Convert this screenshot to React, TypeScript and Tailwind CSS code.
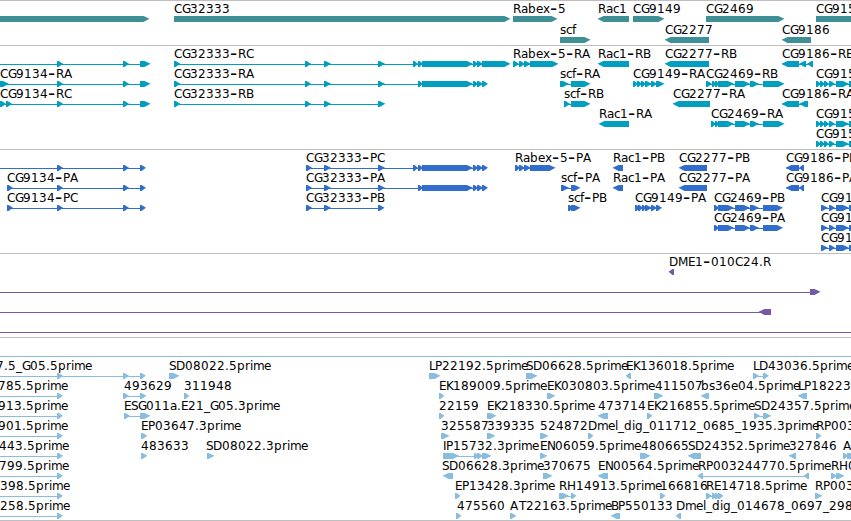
type Feature = {
  row: number;
  label?: string;
  x?: number;
  dir?: "left" | "right";
  line?: [number, number];
  blocks?: [number, number][];
};

type TrackProps = {
  features: Feature[];
  height: number;
  rowHeight?: number;
  color: string;
};

// glyph advances in px, anything not listed is 8
const advances: Record<string, number> = {
  A: 9, B: 7, D: 9, E: 7, H: 9, I: 3, K: 7, L: 6, M: 10, P: 7, S: 7, T: 7,
  a: 7, c: 6, e: 7, f: 4, i: 3, l: 3, m: 11, r: 5, s: 6, x: 7,
  ".": 4, _: 6,
};

const charPositions = (label: string, start: number) => {
  let pos = Math.ceil(start);
  return label
    .split("")
    .map((ch) => {
      const current = pos;
      pos += advances[ch] ?? 8;
      return current;
    })
    .join(" ");
};

// hyphens are set larger, so they sit a little lower to stay centered
const charBaselines = (label: string, y: number) =>
  label
    .split("")
    .map((ch) => (ch === "-" ? y + 1.5 : y))
    .join(" ");

const arrowPoints = (from: number, to: number, top: number, dir: string) => {
  const head = Math.min(6, to - from - 1.5);
  const mid = top + 2.8;
  const bottom = top + 6;
  if (dir === "left") {
    return `${to},${top} ${from + head},${top} ${from},${mid} ${from + head},${bottom} ${to},${bottom}`;
  }
  return `${from},${top} ${to - head},${top} ${to},${mid} ${to - head},${bottom} ${from},${bottom}`;
};

const genes: Feature[] = [
  { row: 0, blocks: [[-10, 149.5]] },
  { row: 0, label: "CG32333", x: 174, blocks: [[174, 510.5]] },
  { row: 0, label: "Rabex-5", x: 513, blocks: [[513, 557.5]] },
  { row: 1, label: "scf", x: 560, blocks: [[560, 590.5]] },
  { row: 0, label: "Rac1", x: 598, dir: "left", blocks: [[597.5, 629]] },
  { row: 0, label: "CG9149", x: 633, blocks: [[633, 664.5]] },
  { row: 1, label: "CG2277", x: 665, dir: "left", blocks: [[664.5, 709]] },
  { row: 0, label: "CG2469", x: 706, blocks: [[706, 784.5]] },
  { row: 1, label: "CG9186", x: 782, dir: "left", blocks: [[781.5, 811]] },
  { row: 0, label: "CG9155", x: 816, blocks: [[816, 900]] },
];

const cg9155Exons: [number, number][] = [[816, 821], [820, 825], [824, 829], [829, 835], [836, 849], [849, 860]];
const cg2469Exons: [number, number][] = [[718, 734], [735, 750], [750, 759], [763, 784.5]];

const transcripts: Feature[] = [
  { row: 0, line: [-5, 145], blocks: [[57, 63], [123, 129], [140, 150.5]] },
  {
    row: 0,
    label: "CG32333-RC",
    x: 174,
    blocks: [[174, 180.5], [305, 311], [324, 331], [378, 385], [413, 418], [418, 423], [422, 473], [473, 478], [477, 483], [482, 510.5]],
  },
  { row: 0, label: "Rabex-5-RA", x: 513, blocks: [[513, 519], [519, 525], [524, 531], [530, 558.5]] },
  { row: 0, label: "Rac1-RB", x: 597.5, dir: "left", blocks: [[597.5, 629]] },
  { row: 0, label: "CG2277-RB", x: 665, dir: "left", blocks: [[664.5, 709]] },
  { row: 0, label: "CG9186-RB", x: 782, dir: "left", blocks: [[781.5, 799], [799, 806], [807, 813]] },
  { row: 1, label: "CG9134-RA", x: 0, blocks: [[-5, 9], [57, 63], [123, 129], [140, 150.5]] },
  {
    row: 1,
    label: "CG32333-RA",
    x: 174,
    blocks: [[174, 180.5], [305, 311], [324, 331], [378, 385], [418, 423], [422, 473], [473, 478], [477, 483], [482, 488]],
  },
  { row: 1, label: "scf-RA", x: 559.5, blocks: [[560, 569], [571, 590.5]] },
  { row: 1, label: "CG9149-RA", x: 633, blocks: [[633, 638], [637, 642], [641, 646], [645, 652], [651, 657], [656, 664.5]] },
  { row: 1, label: "CG2469-RB", x: 706, blocks: [[706, 712], [712, 716], [715, 719], ...cg2469Exons] },
  { row: 1, label: "CG9155-RA", x: 816, blocks: cg9155Exons },
  { row: 2, label: "CG9134-RC", x: 0, blocks: [[0, 6], [6, 12], [57, 63], [123, 129], [140, 150.5]] },
  { row: 2, label: "CG32333-RB", x: 174, blocks: [[174, 180.5], [305, 311], [324, 331], [378, 385.5]] },
  { row: 2, label: "scf-RB", x: 564, blocks: [[564, 570], [571, 590.5]] },
  { row: 2, label: "CG2277-RA", x: 673, dir: "left", blocks: [[672.5, 710]] },
  { row: 2, label: "CG9186-RA", x: 782, dir: "left", blocks: [[781.5, 799], [799, 808]] },
  { row: 3, label: "Rac1-RA", x: 598.5, dir: "left", blocks: [[598.5, 629]] },
  { row: 3, label: "CG2469-RA", x: 711, blocks: [[711, 716], [715, 719], ...cg2469Exons] },
  { row: 3, label: "CG9155-RB", x: 816, blocks: cg9155Exons },
  { row: 4, label: "CG9155-RC", x: 816, blocks: cg9155Exons },
];

const cg9155Coding: [number, number][] = [[821, 828], [829, 835], [836, 849], [849, 860]];
const cg2469Coding: [number, number][] = [[714, 719], [718, 734], [735, 750], [750, 759], [763, 783]];

const proteins: Feature[] = [
  { row: 0, line: [-5, 143], blocks: [[57, 63], [123, 129], [140, 146]] },
  {
    row: 0,
    label: "CG32333-PC",
    x: 306,
    blocks: [[306, 312], [324, 331], [378, 385], [413, 418], [418, 423], [422, 473], [473, 478], [477, 483], [482, 488]],
  },
  { row: 0, label: "Rabex-5-PA", x: 515, blocks: [[515, 520], [519, 525], [524, 531], [530, 555.5]] },
  { row: 0, label: "Rac1-PB", x: 612.5, dir: "left", blocks: [[612.5, 623]] },
  { row: 0, label: "CG2277-PB", x: 679, dir: "left", blocks: [[678.5, 707]] },
  { row: 0, label: "CG9186-PB", x: 786, dir: "left", blocks: [[785.5, 799], [799, 804]] },
  { row: 1, label: "CG9134-PA", x: 7, blocks: [[7, 13], [57, 63], [123, 129], [140, 146]] },
  {
    row: 1,
    label: "CG32333-PA",
    x: 306,
    blocks: [[306, 312], [324, 331], [378, 385], [418, 423], [422, 473], [473, 478], [477, 483], [482, 488]],
  },
  { row: 1, label: "scf-PA", x: 560.5, blocks: [[561, 569], [571, 580.5]] },
  { row: 1, label: "Rac1-PA", x: 612.5, dir: "left", blocks: [[612.5, 623]] },
  { row: 1, label: "CG2277-PA", x: 679, dir: "left", blocks: [[678.5, 707]] },
  { row: 1, label: "CG9186-PA", x: 786, dir: "left", blocks: [[785.5, 799], [799, 804]] },
  { row: 2, label: "CG9134-PC", x: 7, blocks: [[7, 13], [57, 63], [123, 129], [140, 146]] },
  { row: 2, label: "CG32333-PB", x: 306, blocks: [[306, 312], [324, 331], [378, 384.5]] },
  { row: 2, label: "scf-PB", x: 567.5, blocks: [[568, 573], [571, 580.5]] },
  { row: 2, label: "CG9149-PA", x: 635, blocks: [[635, 640], [638, 643], [642, 646], [645, 652], [651, 657], [656, 662]] },
  { row: 2, label: "CG2469-PB", x: 714, blocks: cg2469Coding },
  { row: 2, label: "CG9155-PA", x: 821, blocks: cg9155Coding },
  { row: 3, label: "CG2469-PA", x: 714, blocks: cg2469Coding },
  { row: 3, label: "CG9155-PB", x: 821, blocks: cg9155Coding },
  { row: 4, label: "CG9155-PC", x: 821, blocks: cg9155Coding },
];

const clones: Feature[] = [
  { row: 0, label: "DME1-010C24.R", x: 668.5, dir: "left", blocks: [[668.5, 674]] },
  { row: 1, line: [0, 812], blocks: [[810, 820.5]] },
  { row: 2, line: [0, 762], dir: "left", blocks: [[758.5, 771]] },
  { row: 3, line: [0, 851] },
];

const ests: Feature[] = [
  { row: 0, line: [0, 851] },
  { row: 1, label: "7.5_G05.5prime", x: -4.5, line: [0, 143], blocks: [[57, 63], [123, 129], [140, 146]] },
  { row: 1, label: "SD08022.5prime", x: 168.5, blocks: [[169, 179.5]] },
  { row: 1, label: "LP22192.5prime", x: 428.5, blocks: [[429, 440.5]] },
  { row: 1, label: "SD06628.5prime", x: 525.5, blocks: [[526, 537.5]] },
  { row: 1, label: "EK136018.5prime", x: 626, dir: "left", blocks: [[625.5, 631]] },
  { row: 1, label: "LD43036.5prime", x: 753, blocks: [[753, 759], [763, 769]] },
  { row: 2, label: "785.5prime", x: -2, line: [0, 60], blocks: [[57, 63]] },
  { row: 2, label: "493629", x: 123.5, blocks: [[123, 129], [140, 146.5]] },
  { row: 2, label: "311948", x: 184, blocks: [[184, 189.5]] },
  { row: 2, label: "EK189009.5prime", x: 438.5, blocks: [[439, 444.5]] },
  { row: 2, label: "EK030803.5prime", x: 546.5, blocks: [[547, 555.5]] },
  { row: 2, label: "411507", x: 654.5, blocks: [[654, 663.5]] },
  { row: 2, label: "bs36e04.5prime", x: 700.5, dir: "left", blocks: [[700.5, 709]] },
  { row: 2, label: "LP18223.5prime", x: 797.5, dir: "left", blocks: [[797.5, 807]] },
  { row: 3, label: "913.5prime", x: -2, line: [0, 60], blocks: [[57, 63]] },
  { row: 3, label: "ESG011a.E21_G05.3prime", x: 124, blocks: [[124, 130], [140, 150.5]] },
  { row: 3, label: "22159", x: 438.5, blocks: [[439, 444.5]] },
  { row: 3, label: "EK218330.5prime", x: 486.5, blocks: [[487, 496.5]] },
  { row: 3, label: "473714", x: 598, dir: "left", blocks: [[597.5, 608]] },
  { row: 3, label: "EK216855.5prime", x: 646.5, blocks: [[647, 652.5]] },
  { row: 3, label: "SD24357.5prime", x: 753.5, blocks: [[754, 760], [763, 771.5]] },
  { row: 4, label: "901.5prime", x: -2, line: [0, 60], blocks: [[57, 63]] },
  { row: 4, label: "EP03647.3prime", x: 141, blocks: [[141, 147.5]] },
  { row: 4, label: "325587", x: 440.5, blocks: [[441, 449.5]] },
  { row: 4, label: "339335", x: 487, blocks: [[487, 495.5]] },
  { row: 4, label: "524872", x: 539.5, blocks: [[540, 548.5]] },
  { row: 4, label: "Dmel_dig_011712_0685_1935.3prime", x: 587.5, blocks: [[588, 593.5]] },
  { row: 4, label: "RP0037", x: 815.5, blocks: [[816, 821.5]] },
  { row: 5, label: "443.5prime", x: -1, line: [0, 60], blocks: [[57, 63]] },
  { row: 5, label: "483633", x: 141, blocks: [[141, 147.5]] },
  { row: 5, label: "SD08022.3prime", x: 206, blocks: [[207, 214.5]] },
  { row: 5, label: "IP15732.3prime", x: 442.5, blocks: [[443, 459], [474, 478], [477, 483], [482, 491.5]] },
  { row: 5, label: "EN06059.5prime", x: 539.5, blocks: [[540, 547.5]] },
  { row: 5, label: "480665", x: 640.5, blocks: [[640, 645], [642, 650.5]] },
  { row: 5, label: "SD24352.5prime", x: 687.5, dir: "left", blocks: [[687.5, 701]] },
  { row: 5, label: "327846", x: 788.5, dir: "left", blocks: [[788.5, 796]] },
  { row: 5, label: "A", x: 843, blocks: [[843, 848], [847, 856]] },
  { row: 6, label: "799.5prime", x: -1, line: [0, 60], blocks: [[57, 63]] },
  { row: 6, label: "SD06628.3prime", x: 442, dir: "left", blocks: [[442.5, 453]] },
  { row: 6, label: "370675", x: 543, blocks: [[543, 552.5]] },
  { row: 6, label: "EN00564.5prime", x: 598, dir: "left", blocks: [[597.5, 608]] },
  { row: 6, label: "RP003244770.5prime", x: 697.5, dir: "left", blocks: [[697.5, 703], [803.5, 809]] },
  { row: 6, label: "RH0", x: 830.5, blocks: [[831, 837], [836, 844.5]] },
  { row: 7, label: "398.5prime", x: 0, line: [0, 60], blocks: [[57, 63]] },
  { row: 7, label: "EP13428.3prime", x: 454.5, blocks: [[455, 460.5]] },
  { row: 7, label: "RH14913.5prime", x: 558.5, blocks: [[559, 569], [571, 576.5]] },
  { row: 7, label: "166816", x: 660, blocks: [[660, 665.5]] },
  { row: 7, label: "RE14718.5prime", x: 705.5, blocks: [[706, 712], [712, 717], [715, 720], [718, 723.5]] },
  { row: 7, label: "RP0037", x: 814.5, blocks: [[815, 822.5]] },
  { row: 8, label: "258.5prime", x: 0, line: [0, 60], blocks: [[57, 63]] },
  { row: 8, label: "475560", x: 456.5, blocks: [[456, 461.5]] },
  { row: 8, label: "AT22163.5prime", x: 509.5, blocks: [[510, 516.5]] },
  { row: 8, label: "BP550133", x: 610.5, dir: "left", blocks: [[610.5, 620]] },
  { row: 8, label: "Dmel_dig_014678_0697_2985", x: 675.5, dir: "left", blocks: [[675.5, 681]] },
];

const Track = ({ features, height, rowHeight = 20, color }: TrackProps) => {
  return (
    <section className="border-t border-[#bebebe]">
      <svg width={851} height={height} className={`block ${color}`} fill="currentColor">
        {features.map((feature, index) => {
          const { row, label, x = 0, dir = "right", blocks = [] } = feature;
          const top = row * rowHeight + 15;
          // introns run from the first block to the last one unless given
          const line =
            feature.line ??
            (blocks.length > 1 ? [blocks[0][0] + 1, blocks[blocks.length - 1][1] - 3] : null);

          return (
            <g key={index}>
              {line && <rect x={line[0]} y={top + 3} width={line[1] - line[0]} height={1} />}
              {blocks.map(([from, to]) => (
                <polygon key={from} points={arrowPoints(from, to, top, dir)} />
              ))}
              {label && (
                <text x={charPositions(label, x)} y={charBaselines(label, top - 3)} className="fill-black">
                  {label.split(/(-)/).map((part, i) =>
                    part === "-" ? (
                      <tspan key={i} className="text-[20px]">-</tspan>
                    ) : (
                      part
                    )
                  )}
                </text>
              )}
            </g>
          );
        })}
      </svg>
    </section>
  );
};

const App = () => {
  return (
    <main className="flex h-[521px] w-[851px] flex-col overflow-hidden border-b border-[#bebebe] bg-white font-['DejaVu_Sans',sans-serif] text-[12px]">
      <Track features={genes} height={44} rowHeight={21} color="text-[#3f8f96]" />
      <Track features={transcripts} height={103} color="text-[#009fc0]" />
      <Track features={proteins} height={103} color="text-[#316ecc]" />
      <Track features={clones} height={83} color="text-[#7459a6]" />
      <Track features={ests} height={182} color="text-[#88bddf]" />
    </main>
  );
};

export default App;
